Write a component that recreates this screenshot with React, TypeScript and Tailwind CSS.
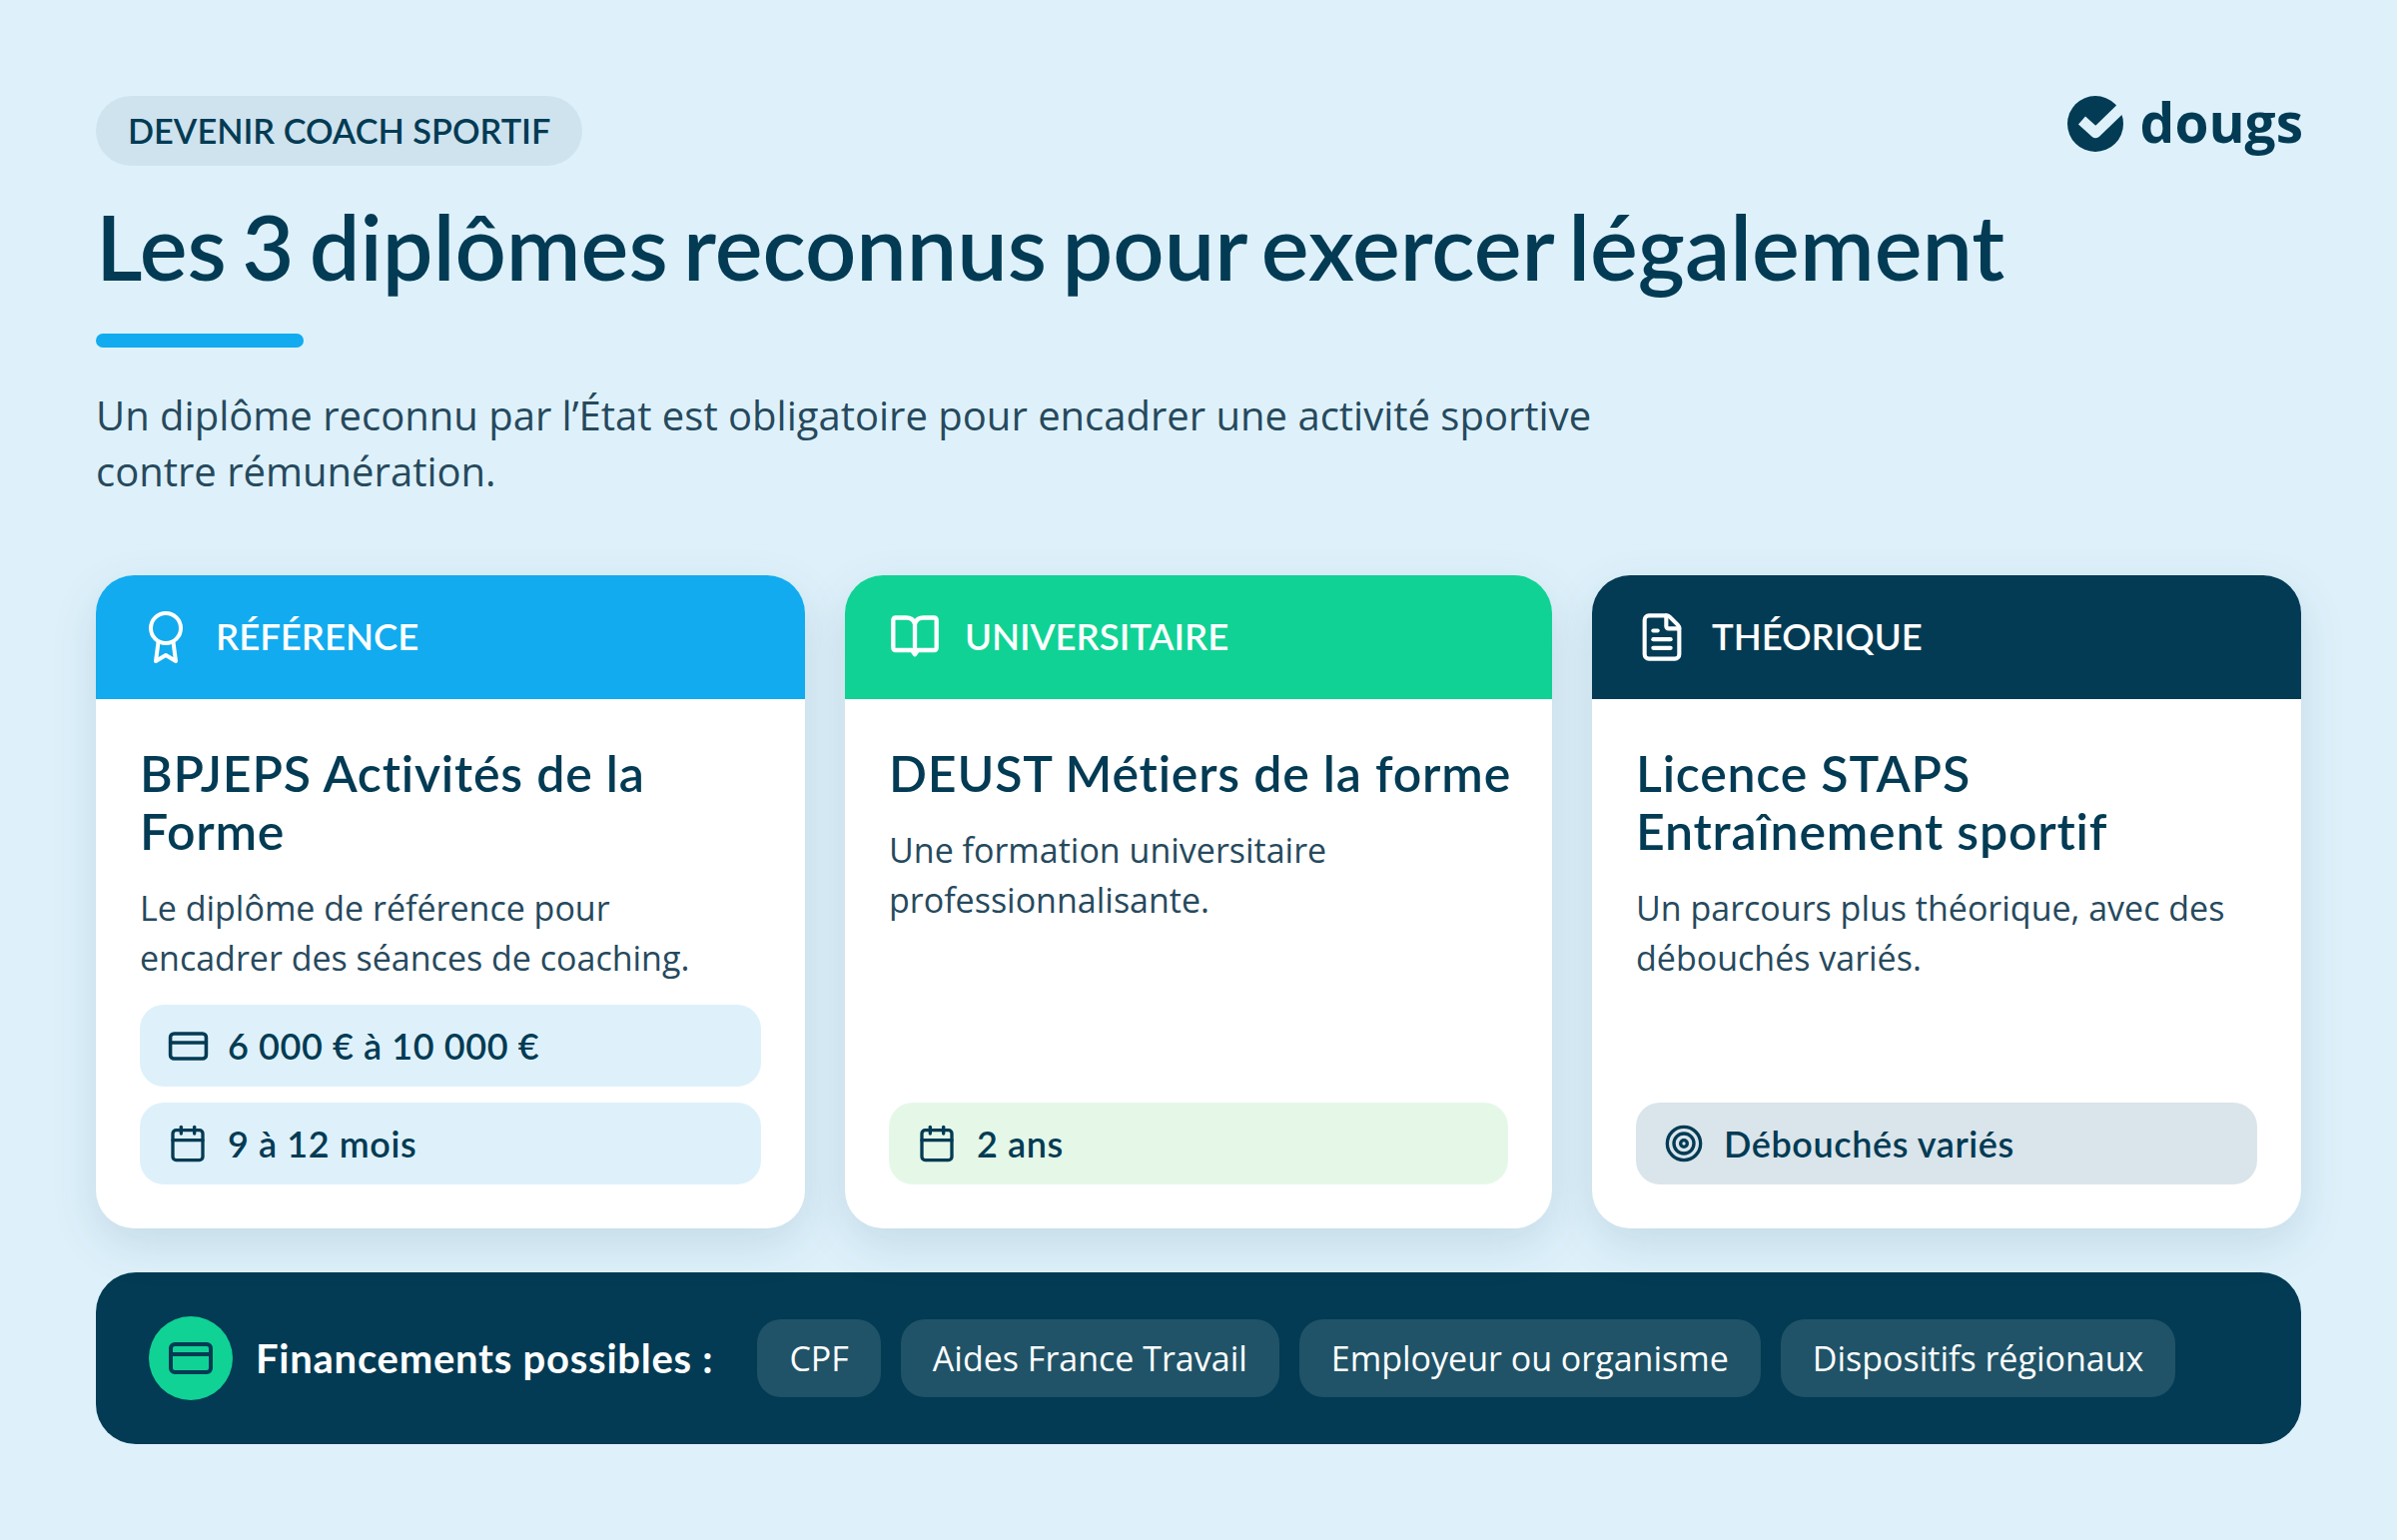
import React from 'react';
import { CreditCard, Calendar, FileText, Target } from 'lucide-react';

const Ribbon = () => (
  <svg width="52" height="52" viewBox="0 0 52 52" fill="none" stroke="currentColor" strokeWidth="4" strokeLinecap="round" strokeLinejoin="round">
    <circle cx="26" cy="17" r="15" />
    <path d="M18.5 31L16 50l10-6 10 6-2.500-19" />
  </svg>
);

const OpenBook = () => (
  <svg width="52" height="52" viewBox="0 0 24 24" fill="none" stroke="currentColor" strokeWidth="2" strokeLinecap="round" strokeLinejoin="round">
    <path d="M3 3h5c1.8 0 3.4 1 4 2.6C12.6 4 14.2 3 16 3h5a1 1 0 0 1 1 1v13a1 1 0 0 1-1 1h-7.6L12 20l-1.4-2H3a1 1 0 0 1-1-1V4a1 1 0 0 1 1-1z" />
    <path d="M12 5.600V18" />
  </svg>
);

const Logo = () => (
  <div className="-mr-[2px] flex items-center gap-[17px]">
    <svg width="56" height="56" viewBox="0 0 56 56">
      <circle cx="28" cy="28" r="28" fill="#033b54" />
      <path d="M14.5 24.5L28.3 37 53 13" fill="none" stroke="#def1fb" strokeWidth="10.5" strokeLinejoin="round" />
    </svg>
    <span className="pb-[4px] font-['Open_Sans',sans-serif] text-[55px] font-bold leading-[52px] text-[#033b54]">dougs</span>
  </div>
);

const InfoRow = ({ icon, text, tint }: { icon: React.ReactNode; text: string; tint: string }) => (
  <div className={`flex h-[82px] items-center gap-[18px] rounded-[24px] px-[26px] text-[#033b54] ${tint}`}>
    <span className="flex w-[44px] shrink-0 justify-center">{icon}</span>
    <span className="font-[Lato,sans-serif] text-[36px] font-semibold tracking-[0.6px]">{text}</span>
  </div>
);

interface CardProps {
  head: string;
  headBg: string;
  icon: React.ReactNode;
  title: React.ReactNode;
  text: React.ReactNode;
  rows: React.ReactNode;
}

const Card = ({ head, headBg, icon, title, text, rows }: CardProps) => (
  <div className="flex h-[654px] flex-col overflow-hidden rounded-[38px] bg-white shadow-[0_16px_48px_rgba(3,59,84,0.12)]">
    <div className={`flex h-[124px] shrink-0 items-center gap-6 px-11 text-white ${headBg}`}>
      <span className="flex w-[52px] shrink-0 justify-center">{icon}</span>
      <span className="pb-[2px] font-[Lato,sans-serif] text-[36.5px] font-semibold">{head}</span>
    </div>
    <div className="flex flex-1 flex-col px-11 pb-11 pt-[45px]">
      <h2 className="whitespace-nowrap font-[Lato,sans-serif] text-[50px] font-semibold leading-[58px] tracking-[0.8px] text-[#033b54]">{title}</h2>
      <p className="mt-[23px] text-[34px] leading-[50px] text-[#26495d]">{text}</p>
      <div className="mt-auto flex flex-col gap-4">{rows}</div>
    </div>
  </div>
);

const chips = ['CPF', 'Aides France Travail', 'Employeur ou organisme', 'Dispositifs régionaux'];

export default function App() {
  const smallCard = <CreditCard size={43} strokeWidth={2} />;
  const calendar = <Calendar size={40} strokeWidth={2} />;

  return (
    <div className="h-[1542px] w-[2400px] bg-[#def1fb] px-24 pt-24 font-['Open_Sans',sans-serif]">
      <div className="flex items-start justify-between">
        <div className="flex h-[70px] items-center rounded-full bg-[#cfe3ee] px-8 font-[Lato,sans-serif] text-[34.3px] font-semibold text-[#033b54]">
          DEVENIR COACH SPORTIF
        </div>
        <Logo />
      </div>

      <h1 className="mt-[31px] font-[Lato,sans-serif] text-[90px] font-semibold leading-[99px] text-[#033b54] [word-spacing:-7px]">
        Les 3 diplômes reconnus pour exercer légalement
      </h1>
      <div className="mt-[38px] h-[14px] w-[208px] rounded-full bg-[#12abef]" />
      <p className="mt-[40px] max-w-[1560px] text-[40px] leading-[56px] text-[#26495d]">
        Un diplôme reconnu par l’État est obligatoire pour encadrer une activité sportive contre rémunération.
      </p>

      <div className="mt-[76px] grid grid-cols-[710px_708px_710px] gap-10">
        <Card
          head="RÉFÉRENCE"
          headBg="bg-[#12abef]"
          icon={<Ribbon />}
          title={<>BPJEPS Activités de la<br />Forme</>}
          text="Le diplôme de référence pour encadrer des séances de coaching."
          rows={
            <>
              <InfoRow icon={smallCard} text="6 000 € à 10 000 €" tint="bg-[#def1fb]" />
              <InfoRow icon={calendar} text="9 à 12 mois" tint="bg-[#def1fb]" />
            </>
          }
        />
        <Card
          head="UNIVERSITAIRE"
          headBg="bg-[#10d295]"
          icon={<OpenBook />}
          title="DEUST Métiers de la forme"
          text="Une formation universitaire professionnalisante."
          rows={<InfoRow icon={calendar} text="2 ans" tint="bg-[#e5f8e8]" />}
        />
        <Card
          head="THÉORIQUE"
          headBg="bg-[#033b54]"
          icon={<FileText size={52} strokeWidth={1.9} />}
          title={<>Licence STAPS<br />Entraînement sportif</>}
          text="Un parcours plus théorique, avec des débouchés variés."
          rows={<InfoRow icon={<Target size={40} strokeWidth={2} />} text="Débouchés variés" tint="bg-[#dae5eb]" />}
        />
      </div>

      <div className="mt-11 flex h-[172px] items-center rounded-[40px] bg-[#033b54] pl-[53px]">
        <div className="flex h-[84px] w-[84px] items-center justify-center rounded-full bg-[#10d295] text-[#033b54]">
          <CreditCard size={48} strokeWidth={2} />
        </div>
        <span className="ml-[23px] font-[Lato,sans-serif] text-[40px] font-bold tracking-[0.75px] text-white">Financements possibles :</span>
        <div className="ml-11 flex gap-5">
          {chips.map((chip) => (
            <span key={chip} className="flex h-[78px] items-center rounded-[24px] bg-[#205367] px-8 text-[34px] text-white">
              {chip}
            </span>
          ))}
        </div>
      </div>
    </div>
  );
}
